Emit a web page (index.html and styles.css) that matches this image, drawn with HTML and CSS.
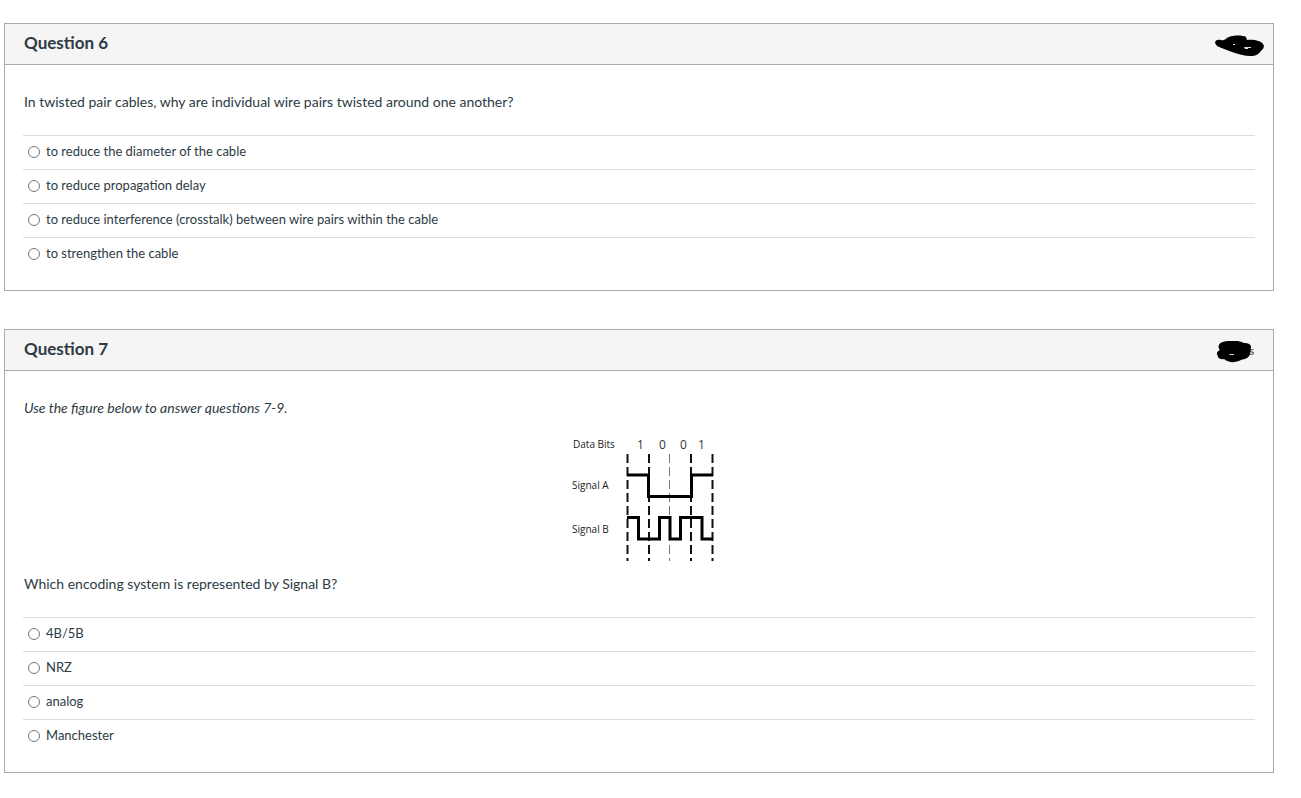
FILE: index.html
```html
<!DOCTYPE html>
<html lang="en">
<head>
    <meta charset="UTF-8">
    <title>Quiz</title>
    <link rel="stylesheet" href="styles.css">
</head>
<body>
    <form class="quiz">
        <section class="question">
            <div class="header">
                <h2>Question 6</h2>
                <svg class="mark" width="50" height="24" viewBox="0 0 50 24" aria-hidden="true">
                    <path class="glint-blue" d="M9 5l3-3h2v2l-3 2z"/>
                    <path d="M0 8C0 5 3 4 6 5C9 6 11 4 14 2C18 0 28 0 31 2L32 5C39 4 46 6 48 9C50 12 48 14 46 16C43 20 40 21 36 21C29 21 23 19 17 17C12 15 6 13 2 11Z"/>
                    <path class="glint" d="M18 9h2v1h-2zM29 12h7v1h-3v1h-3z"/>
                </svg>
            </div>
            <div class="body">
                <p class="text">In twisted pair cables, why are individual wire pairs twisted around one another?</p>
                <div class="answers">
                    <label class="answer"><input type="radio" name="q6">to reduce the diameter of the cable</label>
                    <label class="answer"><input type="radio" name="q6">to reduce propagation delay</label>
                    <label class="answer"><input type="radio" name="q6">to reduce interference (crosstalk) between wire pairs within the cable</label>
                    <label class="answer"><input type="radio" name="q6">to strengthen the cable</label>
                </div>
            </div>
        </section>

        <section class="question">
            <div class="header">
                <h2>Question 7</h2>
                <svg class="mark" width="50" height="24" viewBox="0 0 50 24" aria-hidden="true">
                    <text class="points" x="34" y="14">s</text>
                    <path d="M4 4C5 1 10 0 14 0C19-1 25 0 29 2C33 2 36 3 36 6L35 13C34 17 30 18 26 19C20 22 14 22 9 18C5 19 2 16 3 15C1 13 2 10 5 9C4 8 3 6 4 4Z"/>
                    <path class="glint" d="M14 13h5v1h-4z"/>
                </svg>
            </div>
            <div class="body">
                <p class="text"><em>Use the figure below to answer questions 7-9.</em></p>
                <div class="figure">
                    <svg width="150" height="133" viewBox="0 0 150 133" role="img" aria-label="Data bits 1001 encoded as Signal A and Signal B">
                        <g class="caption">
                            <text x="9" y="17">Data Bits</text>
                            <text x="8" y="58">Signal A</text>
                            <text x="8" y="102">Signal B</text>
                        </g>
                        <g class="bits">
                            <text x="73" y="18">1</text>
                            <text x="95" y="18">0</text>
                            <text x="116" y="18">0</text>
                            <text x="134" y="18">1</text>
                        </g>
                        <path class="clock" d="M63.500 23v107M85 23v107M127 23v107M148.500 23v107"/>
                        <path class="clock light" d="M105.500 23v107"/>
                        <path class="signal" d="M63 44H84.500V65.500H127.500V44H149"/>
                        <path class="signal" d="M63 86.500H74.500V108H95.500V86.500H106V108H116.500V86.500H138V108H149"/>
                    </svg>
                </div>
                <p class="text">Which encoding system is represented by Signal B?</p>
                <div class="answers">
                    <label class="answer"><input type="radio" name="q7">4B/5B</label>
                    <label class="answer"><input type="radio" name="q7">NRZ</label>
                    <label class="answer"><input type="radio" name="q7">analog</label>
                    <label class="answer"><input type="radio" name="q7">Manchester</label>
                </div>
            </div>
        </section>
    </form>
</body>
</html>
```
FILE: styles.css
```css
body {
    margin: 0;
    background: #fff;
    color: #2d3b45;
    font-family: Lato, "Noto Sans", sans-serif;
}
.quiz {
    display: flex;
    flex-direction: column;
    gap: 38px;
    padding: 23px 27px 24px 4px;
}
.question {
    border: 1px solid #aaa;
}
.header {
    display: flex;
    justify-content: space-between;
    align-items: flex-start;
    height: 40px;
    padding: 0 8px 0 19px;
    background: #f5f5f5;
    border-bottom: 1px solid #aaa;
}
.header h2 {
    margin: 0;
    padding-top: 7px;
    font-size: 17px;
    line-height: 24px;
    font-weight: bold;
}
.mark {
    margin-top: 11px;
}
.glint {
    fill: #ddd;
}
.glint-blue {
    fill: #8ab;
}
.points {
    font-size: 12px;
    font-weight: bold;
    fill: #666;
}
.body {
    padding: 25px 18px 19px;
}
.text {
    margin: 0;
    padding-left: 1px;
    font-size: 14px;
    line-height: 24px;
}
.figure {
    display: flex;
    justify-content: center;
    padding: 11px 0 8px;
}
.caption {
    font-family: "Open Sans", sans-serif;
    font-size: 10px;
    fill: #222;
}
.bits {
    font-family: "Open Sans", sans-serif;
    font-size: 12px;
    fill: #333;
}
.clock {
    fill: none;
    stroke: #111;
    stroke-width: 2;
    stroke-dasharray: 9 4;
}
.clock.light {
    stroke: #777;
    stroke-width: 1;
}
.signal {
    fill: none;
    stroke: #000;
    stroke-width: 3;
}
.answers {
    margin-top: 21px;
}
.answer {
    display: flex;
    align-items: flex-start;
    gap: 6px;
    padding: 5px 0 8px 5px;
    border-top: 1px solid #ddd;
    font-size: 13px;
    line-height: 20px;
}
.answer input {
    width: 12px;
    height: 12px;
    margin: 5px 0 0;
}
```
